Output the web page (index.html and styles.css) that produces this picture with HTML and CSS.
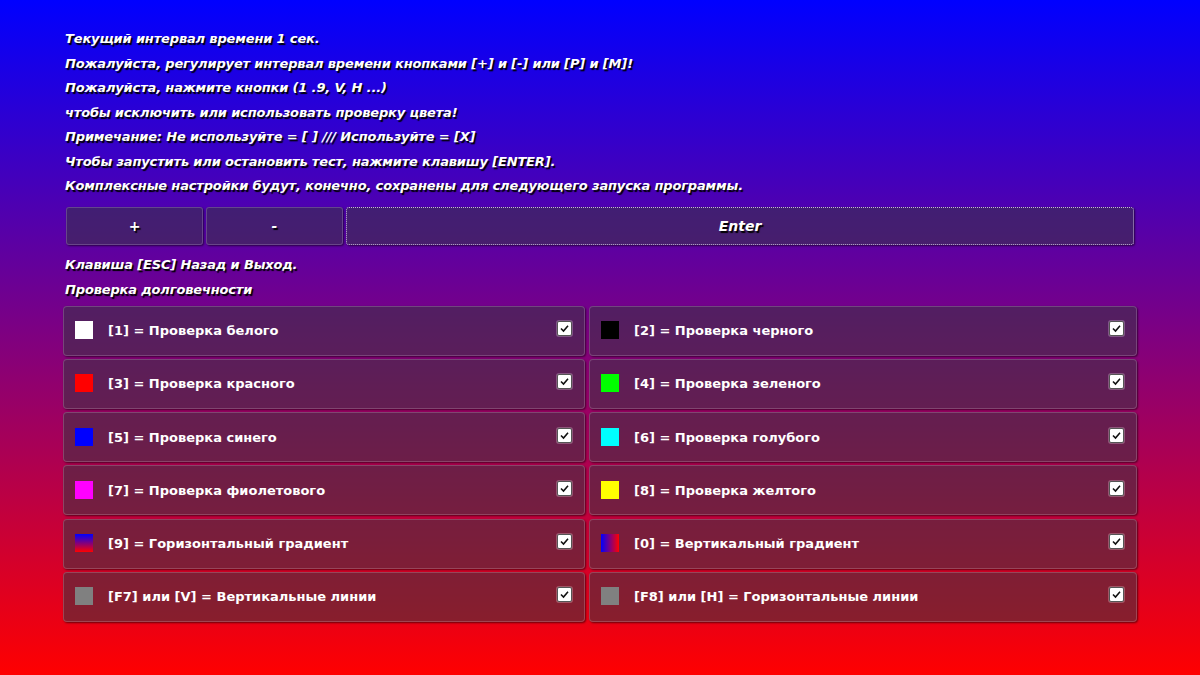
FILE: index.html
```html
<!DOCTYPE html>
<html lang="ru">
<head>
    <meta charset="UTF-8">
    <title>Проверка долговечности</title>
    <link rel="stylesheet" href="styles.css">
</head>
<body>
    <div class="page">
        <div class="info">
            <p>Текущий интервал времени 1 сек.</p>
            <p>Пожалуйста, регулирует интервал времени кнопками [+] и [-] или [P] и [M]!</p>
            <p>Пожалуйста, нажмите кнопки (1 .9, V, H ...)</p>
            <p>чтобы исключить или использовать проверку цвета!</p>
            <p>Примечание: Не используйте = [ ] /// Используйте = [X]</p>
            <p>Чтобы запустить или остановить тест, нажмите клавишу [ENTER].</p>
            <p>Комплексные настройки будут, конечно, сохранены для следующего запуска программы.</p>
        </div>

        <div class="buttons">
            <button class="btn">+</button>
            <button class="btn">-</button>
            <button class="btn focused">Enter</button>
        </div>

        <div class="info after">
            <p>Клавиша [ESC] Назад и Выход.</p>
            <p>Проверка долговечности</p>
        </div>

        <div class="tests">
            <div class="test"><span class="swatch white"></span><span class="label">[1] = Проверка белого</span><span class="check"></span></div>
            <div class="test"><span class="swatch black"></span><span class="label">[2] = Проверка черного</span><span class="check"></span></div>
            <div class="test"><span class="swatch red"></span><span class="label">[3] = Проверка красного</span><span class="check"></span></div>
            <div class="test"><span class="swatch green"></span><span class="label">[4] = Проверка зеленого</span><span class="check"></span></div>
            <div class="test"><span class="swatch blue"></span><span class="label">[5] = Проверка синего</span><span class="check"></span></div>
            <div class="test"><span class="swatch cyan"></span><span class="label">[6] = Проверка голубого</span><span class="check"></span></div>
            <div class="test"><span class="swatch magenta"></span><span class="label">[7] = Проверка фиолетового</span><span class="check"></span></div>
            <div class="test"><span class="swatch yellow"></span><span class="label">[8] = Проверка желтого</span><span class="check"></span></div>
            <div class="test"><span class="swatch hgrad"></span><span class="label">[9] = Горизонтальный градиент</span><span class="check"></span></div>
            <div class="test"><span class="swatch vgrad"></span><span class="label">[0] = Вертикальный градиент</span><span class="check"></span></div>
            <div class="test"><span class="swatch gray"></span><span class="label">[F7] или [V] = Вертикальные линии</span><span class="check"></span></div>
            <div class="test"><span class="swatch gray"></span><span class="label">[F8] или [H] = Горизонтальные линии</span><span class="check"></span></div>
        </div>
    </div>
</body>
</html>
```

FILE: styles.css
```css
:root {
    --panel: rgba(55, 55, 65, 0.55);
    --panel-border: rgba(255, 255, 255, 0.18);
    --shadow: rgba(0, 0, 0, 0.55);
}
html, body {
    height: 100%;
}
body {
    margin: 0;
    background: linear-gradient(180deg, #0000ff 0%, #ff0000 100%);
    font-family: 'DejaVu Sans', Verdana, sans-serif;
    color: #fff;
    overflow: hidden;
}
.page {
    padding: 27px 0 0 63px;
    width: 1074px;
}
.info {
    padding-left: 2px;
}
.info p {
    margin: 0;
    height: 24.5px;
    line-height: 24.5px;
    font-size: 13px;
    letter-spacing: -0.15px;
    font-weight: bold;
    font-style: italic;
    text-shadow: 1.5px 1.5px 1px #000;
    white-space: nowrap;
}
.after {
    margin-top: 8.5px;
    margin-bottom: 3.5px;
}
.buttons {
    display: grid;
    grid-template-columns: 137px 137px 788px;
    gap: 3px;
    margin: 8px 0 0 3px;
}
.btn {
    height: 38px;
    background: var(--panel);
    border: 1px solid var(--panel-border);
    border-radius: 3px;
    box-shadow: 1px 1px 2px var(--shadow);
    color: #fff;
    font-family: inherit;
    font-size: 14px;
    font-weight: bold;
    font-style: italic;
    text-shadow: 1.5px 1.5px 1px #000;
    padding: 0;
}
.btn.focused {
    border: 1px dotted rgba(230, 220, 240, 0.8);
}
.tests {
    display: grid;
    grid-template-columns: 522px 548px;
    grid-auto-rows: 50px;
    gap: 3.3px 4px;
}
.test {
    display: flex;
    align-items: center;
    padding: 0 12px;
    background: var(--panel);
    border: 1px solid var(--panel-border);
    border-radius: 4px;
    box-shadow: 1px 1px 2px var(--shadow);
}
.swatch {
    width: 18px;
    height: 18px;
    flex-shrink: 0;
    margin-left: -1px;
    margin-top: -1px;
}
.label {
    flex: 1;
    margin-left: 15px;
    font-size: 13px;
    font-weight: bold;
    white-space: nowrap;
}
.check {
    width: 13px;
    height: 13px;
    margin-top: -4px;
    background: #fff url("data:image/svg+xml,%3Csvg xmlns='http://www.w3.org/2000/svg' viewBox='0 0 13 13'%3E%3Cpath d='M3 6.5 L5.5 9 L10 3.8' fill='none' stroke='%23111' stroke-width='1.6'/%3E%3C/svg%3E") center / 13px 13px no-repeat;
    border: 1px solid #555;
    border-radius: 2px;
    box-shadow: 0 0 0 1px rgba(255, 255, 255, 0.25);
}
.white { background: #fff; }
.black { background: #000; }
.red { background: #ff0000; }
.green { background: #00ff00; }
.blue { background: #0000ff; }
.cyan { background: #00ffff; }
.magenta { background: #ff00ff; }
.yellow { background: #ffff00; }
.hgrad { background: linear-gradient(180deg, #0000ff, #ff0000); }
.vgrad { background: linear-gradient(90deg, #0000ff, #ff0000); }
.gray { background: #808080; }
```
